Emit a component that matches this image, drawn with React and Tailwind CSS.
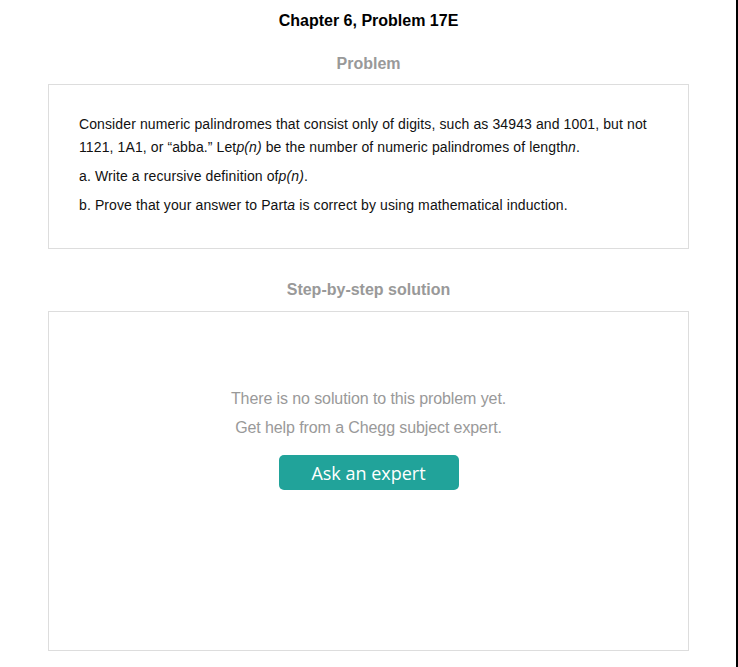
export default function App() {
  return (
    <div
      className="w-[738px] min-h-[667px] bg-white border-r-2 border-black"
      style={{ fontFamily: '"Liberation Sans", Arial, sans-serif' }}
    >
      <div className="pl-12 pr-[47px]">
        <h1 className="pt-[11px] text-[16px] leading-[20px] font-bold text-center text-black">
          Chapter 6, Problem 17E
        </h1>
        <h2 className="mt-[23px] text-[16px] leading-[20px] font-bold text-center text-[#999]">
          Problem
        </h2>
        <div className="mt-[10px] h-[165px] border border-[#ddd] pl-[30px] pr-[20px] pt-[28px] text-[14px] leading-[23px] tracking-[0.11px] text-[#111]">
          <p className="mb-[6px]">
            Consider numeric palindromes that consist only of digits, such as 34943 and 1001, but not
            1121, 1A1, or “abba.” Let<i>p(n)</i> be the number of numeric palindromes of length<i>n</i>.
          </p>
          <p className="mb-[6px]">
            a. Write a recursive definition of<i>p(n)</i>.
          </p>
          <p>
            b. Prove that your answer to Part<i>a</i> is correct by using mathematical induction.
          </p>
        </div>
        <h2 className="mt-[31px] text-[16px] leading-[20px] font-bold text-center text-[#999]">
          Step-by-step solution
        </h2>
        <div className="mt-[11px] h-[340px] border border-[#ddd] flex flex-col items-center pt-[72px]">
          <p className="text-[16px] leading-[29px] text-[#999] tracking-[-0.1px]">There is no solution to this problem yet.</p>
          <p className="text-[16px] leading-[29px] text-[#999] tracking-[-0.1px]">Get help from a Chegg subject expert.</p>
          <button
            className="mt-[13px] w-[180px] h-[35px] rounded-[5px] bg-[#21a39a] text-white text-[18px] leading-[37px] text-center"
            style={{ fontFamily: '"Open Sans", sans-serif' }}
          >
            Ask an expert
          </button>
        </div>
      </div>
    </div>
  );
}
